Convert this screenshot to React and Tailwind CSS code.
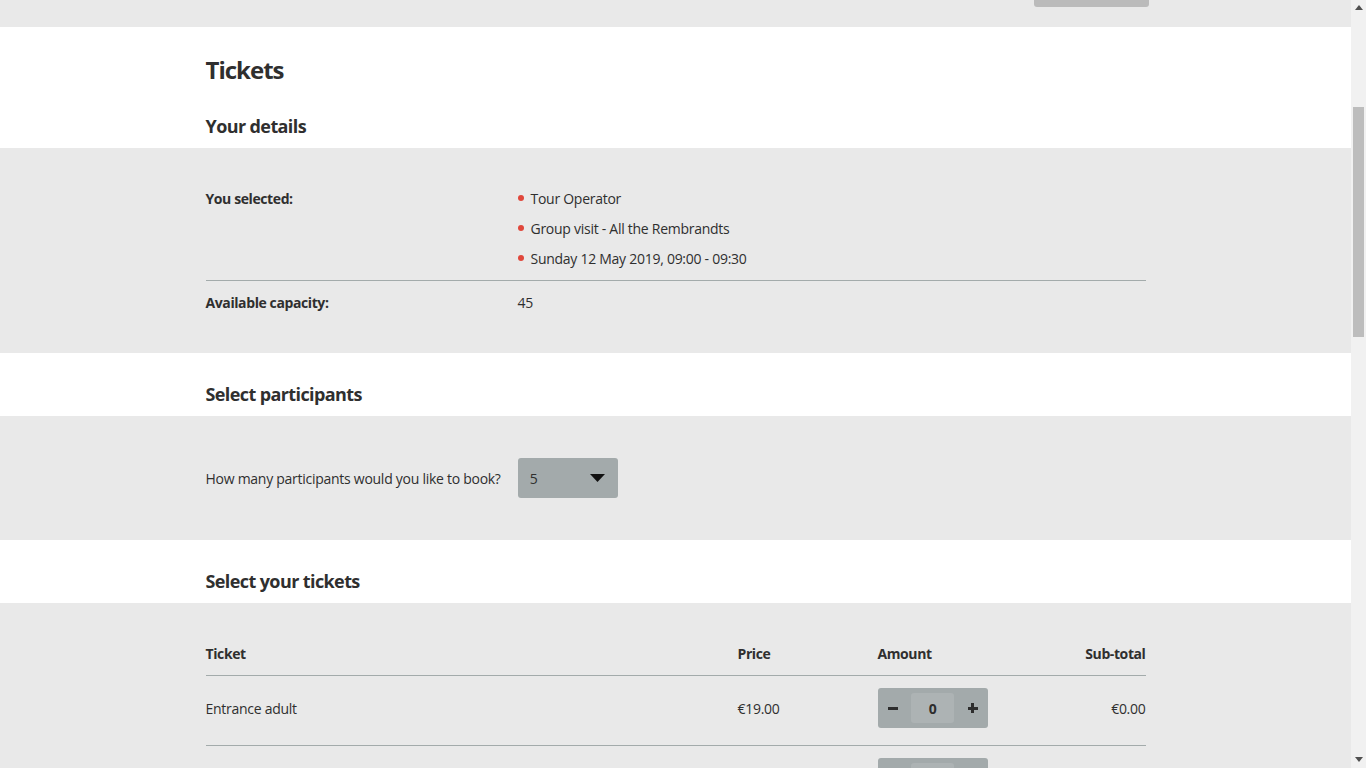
import React from "react";

const font = { fontFamily: '"Open Sans", "Liberation Sans", sans-serif' };

function Bullet({ children }) {
  return (
    <li className="flex items-center h-[30px]">
      <span className="w-[6px] h-[6px] rounded-full bg-[#e0473b] mr-[7px]" />
      <span>{children}</span>
    </li>
  );
}

function Stepper({ value }) {
  return (
    <div className="w-[110px] h-[40px] rounded-[3px] bg-[#a3aaab] flex items-center justify-between px-[9px]">
      <span className="w-[10px] h-[3px] bg-[#2d2d2d] ml-[1px]" />
      <span className="w-[43px] h-[30px] rounded-[3px] bg-[#adb3b4] flex items-center justify-center font-bold text-[14px] text-[#2d2d2d]">
        {value}
      </span>
      <span className="relative w-[10px] h-[10px] mr-[1px] flex items-center justify-center">
        <span className="w-[10px] h-[3px] bg-[#2d2d2d]" />
        <span className="absolute w-[3px] h-[10px] bg-[#2d2d2d]" />
      </span>
    </div>
  );
}

export default function App() {
  return (
    <div className="flex h-[768px] overflow-hidden text-[#2f2f2f] text-[14px] tracking-[-0.27px]" style={font}>
      <main className="w-[1351px] shrink-0 flex flex-col">
        <div className="h-[27px] bg-[#e9e9e9] flex justify-end pr-[202px] shrink-0">
          <div className="w-[115px] h-[7px] bg-[#bbbbbb] rounded-b-[3px]" />
        </div>

        <section className="bg-white pt-[27px] pb-[10px]">
          <div className="w-[940px] mx-auto">
            <h1 className="text-[24px] leading-[32px] font-bold tracking-[-1px]">Tickets</h1>
            <h2 className="mt-[28px] text-[18px] leading-[24px] font-bold tracking-[-0.6px]">Your details</h2>
          </div>
        </section>

        <section className="bg-[#e9e9e9] pt-[35px] pb-[36px]">
          <div className="w-[940px] mx-auto">
            <div className="grid grid-cols-[312px_1fr] pb-[7px] border-b border-[#a3abab]">
              <div className="font-bold h-[30px] flex items-center tracking-[-0.4px]">You selected:</div>
              <ul>
                <Bullet>Tour Operator</Bullet>
                <Bullet>Group visit - All the Rembrandts</Bullet>
                <Bullet>Sunday 12 May 2019, 09:00 - 09:30</Bullet>
              </ul>
            </div>
            <div className="grid grid-cols-[312px_1fr] pt-[6px]">
              <div className="font-bold h-[30px] flex items-center tracking-[-0.4px]">Available capacity:</div>
              <div className="h-[30px] flex items-center">45</div>
            </div>
          </div>
        </section>

        <section className="bg-white pt-[29px] pb-[10px]">
          <div className="w-[940px] mx-auto">
            <h2 className="text-[18px] leading-[24px] font-bold tracking-[-0.6px]">Select participants</h2>
          </div>
        </section>

        <section className="bg-[#e9e9e9] py-[42px]">
          <div className="w-[940px] mx-auto flex items-center">
            <span>How many participants would you like to book?</span>
            <div className="ml-[17px] w-[100px] h-[40px] rounded-[3px] bg-[#a3aaab] flex items-center justify-between pl-[12px] pr-[13px]">
              <span>5</span>
              <svg width="15" height="8" viewBox="0 0 15 8">
                <path d="M0 0 H15 L7.5 8 Z" fill="#111" />
              </svg>
            </div>
          </div>
        </section>

        <section className="bg-white pt-[29px] pb-[10px]">
          <div className="w-[940px] mx-auto">
            <h2 className="text-[18px] leading-[24px] font-bold tracking-[-0.6px]">Select your tickets</h2>
          </div>
        </section>

        <section className="bg-[#e9e9e9] pt-[41px] grow">
          <div className="w-[940px] mx-auto">
            <div className="grid grid-cols-[532px_140px_1fr_1fr] font-bold leading-[20px] pb-[11px] border-b border-[#a3abab] tracking-[-0.4px]">
              <div>Ticket</div>
              <div>Price</div>
              <div>Amount</div>
              <div className="text-right">Sub-total</div>
            </div>
            <div className="grid grid-cols-[532px_140px_1fr_1fr] items-center pt-[12px] pb-[17px] border-b border-[#a3abab]">
              <div>Entrance adult</div>
              <div>€19.00</div>
              <div><Stepper value="0" /></div>
              <div className="text-right">€0.00</div>
            </div>
            <div className="grid grid-cols-[532px_140px_1fr_1fr] items-center pt-[12px] pb-[17px]">
              <div>Entrance child</div>
              <div>€0.00</div>
              <div><Stepper value="0" /></div>
              <div className="text-right">€0.00</div>
            </div>
          </div>
        </section>
      </main>

      <aside className="w-[15px] shrink-0 bg-[#f1f1f1] flex flex-col items-center">
        <svg width="8" height="5" viewBox="0 0 8 5" className="mt-[5px]">
          <path d="M0 5 L4 0 L8 5 Z" fill="#505050" />
        </svg>
        <div className="mt-[97px] w-[11px] h-[230px] bg-[#bdbdbd]" />
        <div className="grow" />
        <svg width="8" height="5" viewBox="0 0 8 5" className="mb-[6px]">
          <path d="M0 0 L8 0 L4 5 Z" fill="#505050" />
        </svg>
      </aside>
    </div>
  );
}
